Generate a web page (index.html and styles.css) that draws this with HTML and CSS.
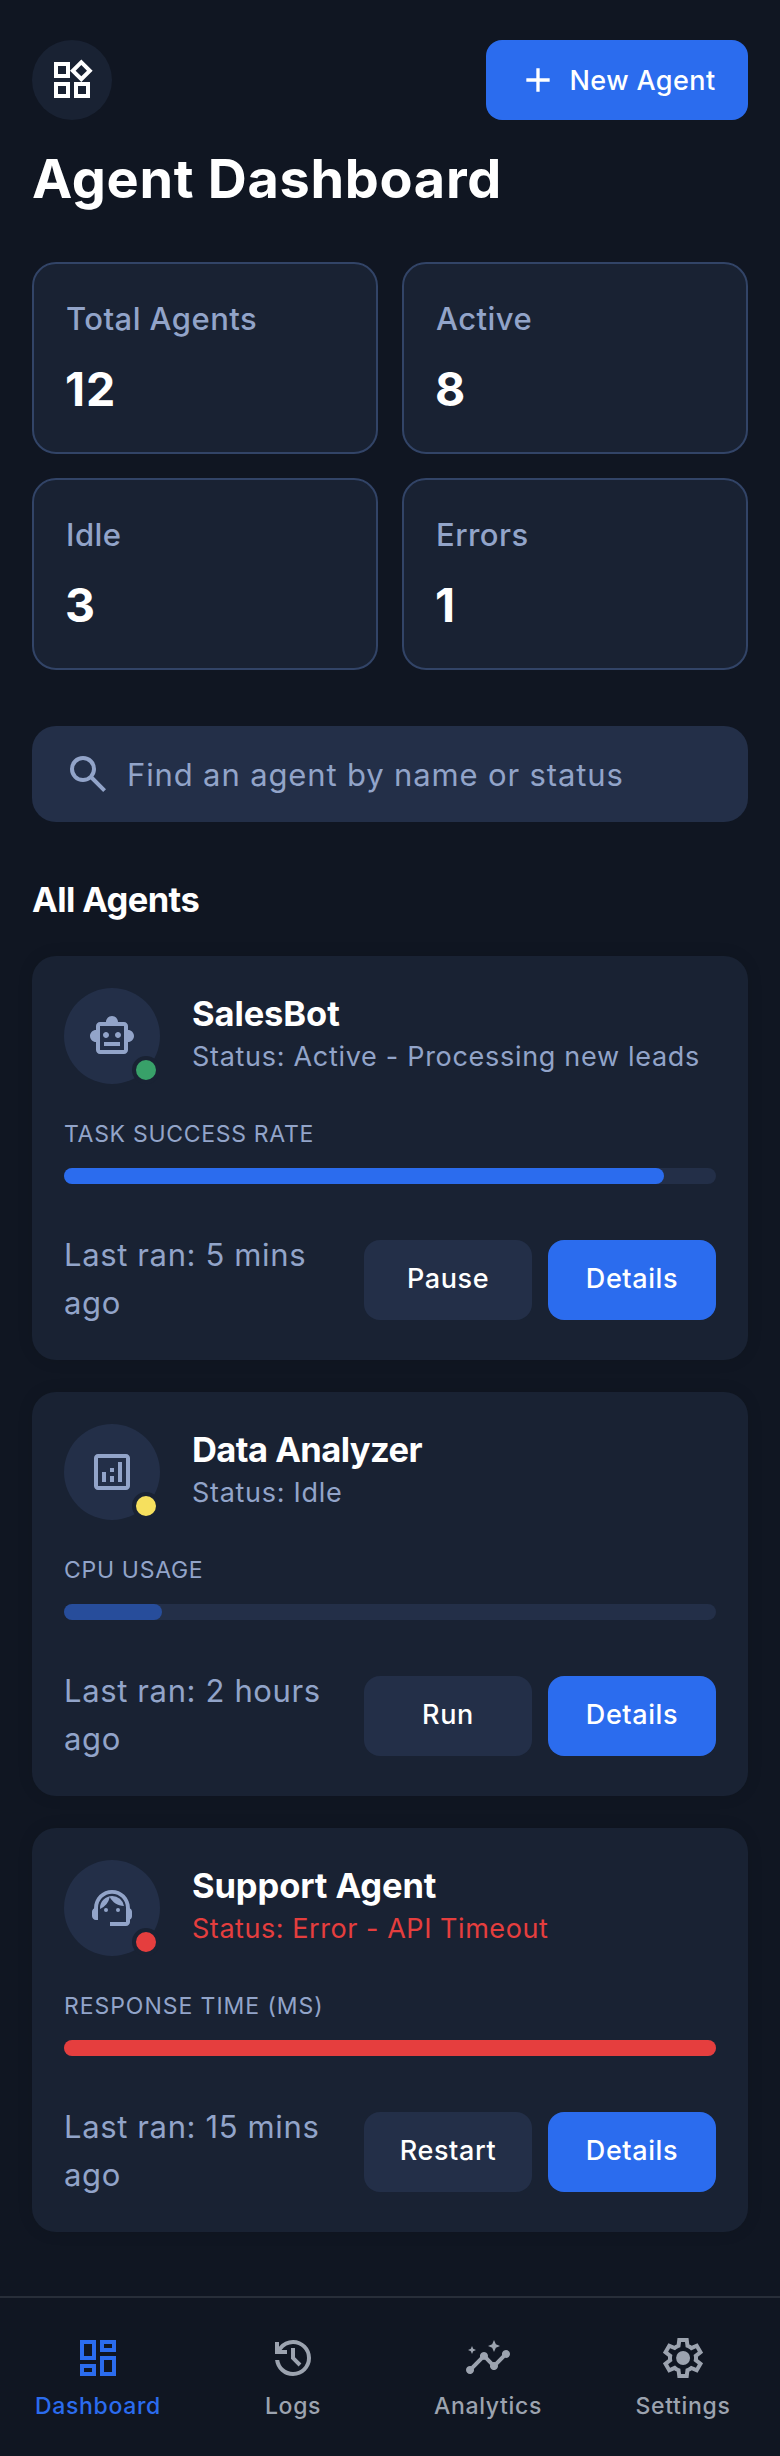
FILE: index.html
```html
<!DOCTYPE html>
<html lang="en">
<head>
<meta charset="utf-8">
<title>Agent Dashboard</title>
<link rel="stylesheet" href="styles.css">
</head>
<body>
<header class="header">
  <div class="header-row">
    <div class="brand">
      <svg class="icon" viewBox="0 0 24 24"><path d="M16.66 4.52l2.83 2.83-2.83 2.83-2.83-2.83 2.83-2.83M9 5v4H5V5h4m10 10v4h-4v-4h4M9 15v4H5v-4h4m7.66-13.31L11 7.34 16.66 13l5.66-5.66-5.66-5.65zM11 3H3v8h8V3zm10 10h-8v8h8v-8zm-10 0H3v8h8v-8z"/></svg>
    </div>
    <button class="button button-primary new-agent">
      <svg class="icon icon-small" viewBox="0 0 24 24"><path d="M19 13h-6v6h-2v-6H5v-2h6V5h2v6h6v2z"/></svg>
      <span>New Agent</span>
    </button>
  </div>
  <h1 class="title">Agent Dashboard</h1>
</header>

<main class="main">
  <section class="stats">
    <div class="stat"><p class="stat-label">Total Agents</p><p class="stat-value stat-value-wide">12</p></div>
    <div class="stat"><p class="stat-label">Active</p><p class="stat-value">8</p></div>
    <div class="stat"><p class="stat-label">Idle</p><p class="stat-value">3</p></div>
    <div class="stat"><p class="stat-label">Errors</p><p class="stat-value">1</p></div>
  </section>

  <label class="search">
    <svg class="icon" viewBox="0 -960 960 960"><path d="M784-120 532-372q-30 24-69 38t-83 14q-109 0-184.5-75.5T120-580q0-109 75.5-184.5T380-840q109 0 184.5 75.5T640-580q0 44-14 83t-38 69l252 252-56 56ZM380-400q75 0 127.5-52.5T560-580q0-75-52.5-127.5T380-760q-75 0-127.5 52.5T200-580q0 75 52.5 127.5T380-400Z"/></svg>
    <span class="search-text">Find an agent by name or status</span>
  </label>

  <h2 class="section-title">All Agents</h2>

  <section class="agents">
    <article class="card">
      <div class="agent">
        <div class="avatar">
          <svg class="icon" viewBox="0 0 24 24"><path d="M20 9V7c0-1.1-.9-2-2-2h-3c0-1.66-1.34-3-3-3S9 3.34 9 5H6c-1.1 0-2 .9-2 2v2c-1.66 0-3 1.34-3 3s1.34 3 3 3v4c0 1.1.9 2 2 2h12c1.1 0 2-.9 2-2v-4c1.66 0 3-1.34 3-3s-1.34-3-3-3zm-2 10H6V7h12v12zm-9-6c-.83 0-1.5-.67-1.5-1.5S8.17 10 9 10s1.5.67 1.5 1.5S9.83 13 9 13zm7.5-1.5c0 .83-.67 1.5-1.5 1.5s-1.5-.67-1.5-1.5.67-1.5 1.5-1.5 1.5.67 1.5 1.5zM8 15h8v2H8v-2z"/></svg>
          <span class="dot dot-active"></span>
        </div>
        <div class="agent-text">
          <h3 class="agent-name">SalesBot</h3>
          <p class="agent-status">Status: Active - Processing new leads</p>
        </div>
      </div>
      <div class="metric">
        <p class="metric-label">TASK SUCCESS RATE</p>
        <div class="bar"><div class="bar-fill" style="width: 92%"></div></div>
      </div>
      <div class="card-footer">
        <p class="last-ran">Last ran: 5 mins ago</p>
        <div class="actions">
          <button class="button button-secondary">Pause</button>
          <button class="button button-primary">Details</button>
        </div>
      </div>
    </article>

    <article class="card">
      <div class="agent">
        <div class="avatar">
          <svg class="icon" viewBox="0 0 24 24"><path d="M19 3H5c-1.1 0-2 .9-2 2v14c0 1.1.9 2 2 2h14c1.1 0 2-.9 2-2V5c0-1.1-.9-2-2-2zm0 16H5V5h14v14zM7 12h2v5H7zM15 7h2v10h-2zM11 14h2v3h-2zM11 10h2v2h-2z"/></svg>
          <span class="dot dot-idle"></span>
        </div>
        <div class="agent-text">
          <h3 class="agent-name agent-name-tight">Data Analyzer</h3>
          <p class="agent-status">Status: Idle</p>
        </div>
      </div>
      <div class="metric">
        <p class="metric-label">CPU USAGE</p>
        <div class="bar"><div class="bar-fill bar-fill-dim" style="width: 15%"></div></div>
      </div>
      <div class="card-footer">
        <p class="last-ran">Last ran: 2 hours ago</p>
        <div class="actions">
          <button class="button button-secondary">Run</button>
          <button class="button button-primary">Details</button>
        </div>
      </div>
    </article>

    <article class="card">
      <div class="agent">
        <div class="avatar">
          <svg class="icon" viewBox="0 0 24 24"><path d="M21 12.22C21 6.73 16.74 3 12 3c-4.69 0-9 3.65-9 9.28-.6.34-1 .98-1 1.72v2c0 1.1.9 2 2 2h1v-6.1c0-3.87 3.13-7 7-7s7 3.13 7 7V19h-8v2h8c1.1 0 2-.9 2-2v-1.22c.59-.31 1-.92 1-1.64v-2.3c0-.7-.41-1.31-1-1.62z"/><circle cx="9" cy="13" r="1"/><circle cx="15" cy="13" r="1"/><path d="M18 11.03A6.04 6.04 0 0 0 12.05 6c-3.03 0-6.29 2.51-6.03 6.45a8.075 8.075 0 0 0 4.86-5.89c1.31 2.63 4 4.44 7.12 4.47z"/></svg>
          <span class="dot dot-error"></span>
        </div>
        <div class="agent-text">
          <h3 class="agent-name">Support Agent</h3>
          <p class="agent-status agent-status-error">Status: Error - API Timeout</p>
        </div>
      </div>
      <div class="metric">
        <p class="metric-label metric-label-wide">RESPONSE TIME (MS)</p>
        <div class="bar"><div class="bar-fill bar-fill-error" style="width: 100%"></div></div>
      </div>
      <div class="card-footer">
        <p class="last-ran">Last ran: 15 mins ago</p>
        <div class="actions">
          <button class="button button-secondary">Restart</button>
          <button class="button button-primary">Details</button>
        </div>
      </div>
    </article>
  </section>
</main>

<nav class="nav">
  <a class="nav-item nav-item-active">
    <svg class="icon" viewBox="0 0 24 24"><path d="M19 5v2h-4V5h4M9 5v6H5V5h4m10 8v6h-4v-6h4M9 17v2H5v-2h4M21 3h-8v6h8V3zM11 3H3v10h8V3zm10 8h-8v10h8V11zm-10 4H3v6h8v-6z"/></svg>
    <span>Dashboard</span>
  </a>
  <a class="nav-item">
    <svg class="icon" viewBox="0 -960 960 960"><path d="M480-120q-138 0-240.5-91.5T122-440h82q14 104 92.5 172T480-200q117 0 198.5-81.5T760-480q0-117-81.5-198.5T480-760q-69 0-129 32t-101 88h110v80H120v-240h80v94q51-64 124.5-99T480-840q75 0 140.5 28.5t114 77q48.5 48.5 77 114T840-480q0 75-28.5 140.5t-77 114q-48.5 48.5-114 77T480-120Zm112-192L440-464v-216h80v184l128 128-56 56Z"/></svg>
    <span>Logs</span>
  </a>
  <a class="nav-item">
    <svg class="icon" viewBox="0 0 24 24"><path d="M21 8c-1.45 0-2.26 1.44-1.93 2.51l-3.55 3.56c-.3-.09-.74-.09-1.04 0l-2.55-2.55C12.27 10.45 11.46 9 10 9c-1.45 0-2.27 1.44-1.93 2.52l-4.56 4.55C2.44 15.74 1 16.55 1 18c0 1.1.9 2 2 2 1.45 0 2.26-1.44 1.93-2.51l4.55-4.56c.3.09.74.09 1.04 0l2.55 2.55C12.73 16.55 13.54 18 15 18c1.45 0 2.27-1.44 1.93-2.52l3.56-3.55c1.07.33 2.51-.48 2.51-1.93 0-1.1-.9-2-2-2z"/><path d="M15 9l.94-2.07L18 6l-2.06-.93L15 3l-.92 2.07L12 6l2.08.93zM4 10l.6-1.4L6 8l-1.4-.6L4 6l-.6 1.4L2 8l1.4.6z"/></svg>
    <span>Analytics</span>
  </a>
  <a class="nav-item">
    <svg class="icon" viewBox="0 -960 960 960"><path d="m370-80-16-128q-13-5-24.5-12T307-235l-119 50L78-375l103-78q-1-7-1-13.5v-27q0-6.5 1-13.5L78-585l110-190 119 50q11-8 23-15t24-12l16-128h220l16 128q13 5 24.5 12t22.5 15l119-50 110 190-103 78q1 7 1 13.5v27q0 6.5-2 13.5l103 78-110 190-118-50q-11 8-23 15t-24 12L590-80H370Zm70-80h79l14-106q31-8 57.5-23.5T639-327l99 41 39-68-86-65q5-14 7-29.5t2-31.5q0-16-2-31.5t-7-29.5l86-65-39-68-99 42q-22-23-48.5-38.5T533-694l-13-106h-79l-14 106q-31 8-57.5 23.5T321-633l-99-41-39 68 86 64q-5 15-7 30t-2 32q0 16 2 31t7 30l-86 65 39 68 99-42q22 23 48.5 38.5T427-266l13 106Z"/><circle cx="482" cy="-480" r="140"/></svg>
    <span>Settings</span>
  </a>
</nav>
</body>
</html>
```
FILE: styles.css
```css
* {
  box-sizing: border-box;
}

body {
  margin: 0;
  background: #101622;
  color: #fff;
  font-family: Inter, "Liberation Sans", sans-serif;
  font-size: 31px;
}

h1, h2, h3, p {
  margin: 0;
}

.icon {
  display: block;
  flex: none;
  width: 48px;
  height: 48px;
  fill: currentColor;
}

.icon-small {
  width: 40px;
  height: 40px;
}

.header {
  padding: 40px 32px 0;
}

.header-row {
  display: flex;
  align-items: center;
  justify-content: space-between;
}

.brand {
  display: flex;
  align-items: center;
  justify-content: center;
  width: 80px;
  height: 80px;
  border-radius: 50%;
  background: #192233;
}

.button {
  display: flex;
  align-items: center;
  justify-content: center;
  width: 168px;
  height: 80px;
  padding: 0 0 3px;
  border: 0;
  border-radius: 16px;
  color: #fff;
  font-family: inherit;
  font-size: 27px;
  font-weight: 550;
  letter-spacing: 0.6px;
  white-space: nowrap;
}

.button-primary {
  background: #2b6cee;
}

.button-secondary {
  background: #232f48;
}

.new-agent {
  gap: 12px;
  width: 262px;
  padding: 0 1px 0 0;
  letter-spacing: 0.4px;
}

.title {
  padding-top: 24px;
  font-size: 54px;
  font-weight: 700;
  line-height: 70px;
  letter-spacing: 0.7px;
}

.main {
  padding: 48px 32px 64px;
}

.stats {
  display: grid;
  grid-template-columns: 1fr 1fr;
  gap: 24px;
}

.stat {
  height: 192px;
  padding: 32px;
  border: 2px solid #324467;
  border-radius: 24px;
  background: #192233;
}

.stat-label {
  color: #92a4c9;
  font-weight: 500;
  line-height: 46px;
  letter-spacing: 0.45px;
}

.stat-value {
  padding-top: 18px;
  font-size: 46.5px;
  font-weight: 700;
  line-height: 58px;
  text-indent: -1px;
}

.stat-value-wide {
  letter-spacing: 1px;
}

.search {
  display: flex;
  align-items: center;
  gap: 15px;
  height: 96px;
  margin-top: 56px;
  padding: 0 32px;
  border-radius: 24px;
  background: #232f48;
  color: #92a4c9;
}

.search-text {
  letter-spacing: 0.86px;
}

.section-title {
  margin: 55px 0 33px;
  font-size: 34.5px;
  font-weight: 700;
  line-height: 46px;
  letter-spacing: -0.6px;
}

.agents {
  display: grid;
  gap: 32px;
}

.card {
  padding: 32px;
  border-radius: 24px;
  background: #192233;
  box-shadow: 0 0 16px rgba(0, 0, 0, 0.1);
}

.agent {
  display: flex;
  align-items: center;
  gap: 32px;
}

.avatar {
  position: relative;
  display: flex;
  flex: none;
  align-items: center;
  justify-content: center;
  width: 96px;
  height: 96px;
  border-radius: 50%;
  background: #232f48;
  color: #92a4c9;
}

.dot {
  position: absolute;
  right: 0;
  bottom: 0;
  width: 28px;
  height: 28px;
  border: 4px solid #192233;
  border-radius: 50%;
}

.dot-active {
  background: #38a169;
}

.dot-idle {
  background: #f6e05e;
}

.dot-error {
  background: #e53e3e;
}

.agent-name {
  font-size: 34.5px;
  font-weight: 700;
  line-height: 40px;
  letter-spacing: -0.1px;
}

.agent-name-tight {
  letter-spacing: -0.56px;
}

.agent-status {
  color: #92a4c9;
  font-size: 27px;
  line-height: 45px;
  letter-spacing: 0.7px;
}

.agent-status-error {
  color: #e53e3e;
  letter-spacing: 0.55px;
}

.metric {
  padding-top: 32px;
}

.metric-label {
  color: #92a4c9;
  font-size: 23px;
  line-height: 36px;
  letter-spacing: 0.7px;
}

.metric-label-wide {
  letter-spacing: 0.95px;
}

.bar {
  height: 16px;
  margin-top: 16px;
  border-radius: 8px;
  background: #232f48;
}

.bar-fill {
  height: 100%;
  border-radius: 8px;
  background: #2b6cee;
}

.bar-fill-dim {
  opacity: 0.5;
}

.bar-fill-error {
  background: #e53e3e;
}

.card-footer {
  display: flex;
  align-items: center;
  justify-content: space-between;
  gap: 32px;
  padding-top: 48px;
}

.last-ran {
  flex: 1;
  margin: -1px 0 1px;
  color: #92a4c9;
  line-height: 48px;
  letter-spacing: 0.63px;
}

.actions {
  display: flex;
  gap: 16px;
}

.nav {
  display: grid;
  grid-template-columns: repeat(4, 1fr);
  height: 160px;
  padding-top: 36px;
  border-top: 2px solid #282e39;
}

.nav-item {
  display: flex;
  flex-direction: column;
  align-items: center;
  gap: 6px;
  color: #9ca3af;
  font-size: 23px;
  font-weight: 500;
  line-height: 36px;
  letter-spacing: 0.67px;
}

.nav-item span {
  padding-left: 1px;
}

.nav-item-active {
  color: #2b6cee;
}
```
